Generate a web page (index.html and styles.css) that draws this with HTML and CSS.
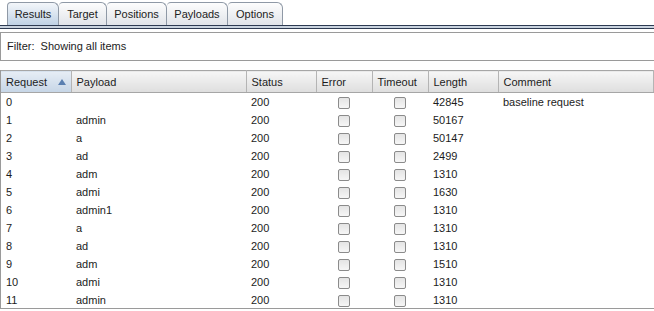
FILE: index.html
```html
<!DOCTYPE html>
<html lang="en">
<head>
  <meta charset="UTF-8">
  <title>Intruder attack results</title>
  <link rel="stylesheet" href="styles.css">
</head>
<body>

  <div class="tabs">
    <div class="tab selected" style="width:52px">Results</div>
    <div class="tab" style="width:48px">Target</div>
    <div class="tab" style="width:60px">Positions</div>
    <div class="tab" style="width:61px">Payloads</div>
    <div class="tab" style="width:55px">Options</div>
  </div>
  <div class="tab-line"></div>

  <div class="filter">Filter:&nbsp; Showing all items</div>

  <div class="results">
    <table>
      <colgroup>
        <col style="width:70px">
        <col style="width:175px">
        <col style="width:70px">
        <col style="width:56px">
        <col style="width:56px">
        <col style="width:70px">
        <col>
      </colgroup>
      <thead>
        <tr>
          <th class="sorted">Request <span class="arrow"></span></th>
          <th>Payload</th>
          <th>Status</th>
          <th>Error</th>
          <th>Timeout</th>
          <th>Length</th>
          <th>Comment</th>
        </tr>
      </thead>
      <tbody id="rows"></tbody>
    </table>
  </div>

  <script>
    const rows = [
      [0, "", 200, 42845, "baseline request"],
      [1, "admin", 200, 50167, ""],
      [2, "a", 200, 50147, ""],
      [3, "ad", 200, 2499, ""],
      [4, "adm", 200, 1310, ""],
      [5, "admi", 200, 1630, ""],
      [6, "admin1", 200, 1310, ""],
      [7, "a", 200, 1310, ""],
      [8, "ad", 200, 1310, ""],
      [9, "adm", 200, 1510, ""],
      [10, "admi", 200, 1310, ""],
      [11, "admin", 200, 1310, ""]
    ];

    const tbody = document.getElementById("rows");
    for (const r of rows) {
      const tr = document.createElement("tr");
      tr.innerHTML = `<td>${r[0]}</td><td>${r[1]}</td><td>${r[2]}</td>` +
        `<td class="check"><span class="box"></span></td>` +
        `<td class="check"><span class="box"></span></td>` +
        `<td>${r[3]}</td><td>${r[4]}</td>`;
      tbody.appendChild(tr);
    }
  </script>
</body>
</html>
```

FILE: styles.css
```css
body {
  margin: 0;
  font-family: 'Liberation Sans', Arial, sans-serif;
  font-size: 11px;
  color: #1c1c1c;
  background: #fff;
  width: 654px;
  height: 311px;
  overflow: hidden;
}

.tabs {
  display: flex;
  padding: 2px 0 0 7px;
  height: 23px;
}

.tab {
  box-sizing: border-box;
  height: 23px;
  padding-top: 5px;
  text-align: center;
  border: 1px solid #8f99a6;
  border-bottom: none;
  border-left: none;
  border-radius: 4px 6px 0 0;
  background: linear-gradient(#fdfdfd, #e1e4e9);
  color: #222;
}

.tab:first-child {
  border-left: 1px solid #8f99a6;
}

.tab.selected {
  background: linear-gradient(#f3f6fa, #c0d2e5);
}

.tab-line {
  height: 2px;
  border-top: 1px solid #2e3b52;
  border-bottom: 1px solid #2e3b52;
  background: #c9d3df;
}

.filter {
  margin-top: 3px;
  height: 27px;
  line-height: 27px;
  padding-left: 6px;
  border-top: 1px solid #9a9a9a;
  border-bottom: 1px solid #9a9a9a;
  border-left: 1px solid #9a9a9a;
}

.results {
  margin-top: 9px;
  border-left: 1px solid #9a9a9a;
  border-bottom: 1px solid #9a9a9a;
  height: 238px;
  overflow: hidden;
}

table {
  width: 653px;
  table-layout: fixed;
  border-collapse: collapse;
}

th {
  height: 22px;
  padding: 0 0 0 5px;
  text-align: left;
  font-weight: normal;
  border-top: 1px solid #a6a6a6;
  border-bottom: 1px solid #a6a6a6;
  border-right: 1px solid #b4b4b4;
  background: linear-gradient(#f6f6f6, #dedede);
  box-sizing: border-box;
}

th.sorted {
  background: linear-gradient(#e6edf5, #c6d5e6);
  position: relative;
}

.arrow {
  position: absolute;
  right: 5px;
  top: 8px;
  width: 0;
  height: 0;
  border-left: 4px solid transparent;
  border-right: 4px solid transparent;
  border-bottom: 6px solid #5a7fb0;
}

td {
  height: 18px;
  padding: 0 0 0 5px;
  white-space: nowrap;
}

td.check {
  padding: 0;
  text-align: center;
}

.box {
  display: inline-block;
  vertical-align: middle;
  width: 10px;
  height: 10px;
  border: 1px solid #8b8b8b;
  border-radius: 2px;
  background: linear-gradient(#e4e4e4, #f6f6f6);
}
```
